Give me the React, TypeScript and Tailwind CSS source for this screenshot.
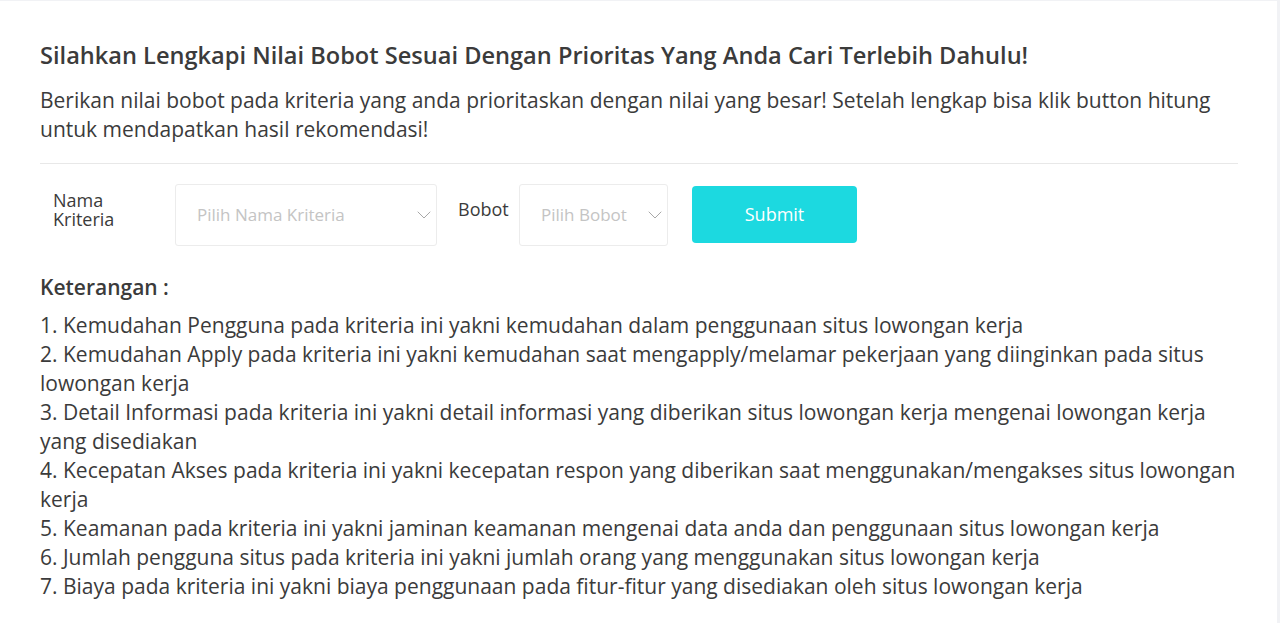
import { ChevronDown } from "lucide-react";

const items = [
  "1. Kemudahan Pengguna pada kriteria ini yakni kemudahan dalam penggunaan situs lowongan kerja",
  "2. Kemudahan Apply pada kriteria ini yakni kemudahan saat mengapply/melamar pekerjaan yang diinginkan pada situs lowongan kerja",
  "3. Detail Informasi pada kriteria ini yakni detail informasi yang diberikan situs lowongan kerja mengenai lowongan kerja yang disediakan",
  "4. Kecepatan Akses pada kriteria ini yakni kecepatan respon yang diberikan saat menggunakan/mengakses situs lowongan kerja",
  "5. Keamanan pada kriteria ini yakni jaminan keamanan mengenai data anda dan penggunaan situs lowongan kerja",
  "6. Jumlah pengguna situs pada kriteria ini yakni jumlah orang yang menggunakan situs lowongan kerja",
  "7. Biaya pada kriteria ini yakni biaya penggunaan pada fitur-fitur yang disediakan oleh situs lowongan kerja",
];

const SelectBox = ({ placeholder, width }: { placeholder: string; width: string }) => (
  <div
    className={`${width} h-[62px] flex items-center justify-between pl-[21px] pr-0 border border-[#ececec] rounded-[3px] bg-white`}
  >
    <span className="text-[17px] text-[#c4c4c4]">{placeholder}</span>
    <ChevronDown className="w-6 h-6 text-[#a8a8a8]" strokeWidth={1} />
  </div>
);

export default function App() {
  return (
    <div
      className="min-h-screen bg-[#f1f2f5] pt-px pr-[3px]"
      style={{ fontFamily: '"Open Sans", "Liberation Sans", sans-serif' }}
    >
      <div className="bg-white min-h-[622px] pl-10 pr-[39px] pt-[38px] pb-6 text-[#3b3b3b]">
        <h1 className="text-[23.6px] font-semibold leading-[32px]">
          Silahkan Lengkapi Nilai Bobot Sesuai Dengan Prioritas Yang Anda Cari Terlebih Dahulu!
        </h1>
        <p className="mt-[15px] text-[21px] leading-[29px]">
          Berikan nilai bobot pada kriteria yang anda prioritaskan dengan nilai yang besar! Setelah lengkap bisa klik
          button hitung untuk mendapatkan hasil rekomendasi!
        </p>
        <hr className="mt-[19px] border-t border-[#e8e8e8]" />

        {/* Form */}
        <div className="flex items-start mt-5">
          <label className="w-[135px] pl-[13px] pt-[7px] text-[18px] leading-[19px]">
            <span className="block">Nama</span>
            <span className="block">Kriteria</span>
          </label>
          <SelectBox placeholder="Pilih Nama Kriteria" width="w-[262px]" />
          <label className="ml-[21px] w-[61px] pt-[15px] text-[18px] leading-[20px]">Bobot</label>
          <SelectBox placeholder="Pilih Bobot" width="w-[149px]" />
          <button className="ml-6 mt-[2px] w-[165px] h-[57px] rounded-[4px] bg-[#1cd9e0] text-white text-[18px]">
            Submit
          </button>
        </div>

        <h2 className="mt-[26px] text-[21px] font-semibold leading-[30px]">Keterangan :</h2>
        <div className="mt-[9px] text-[21px] leading-[29px]">
          {items.map((t) => (
            <p key={t}>{t}</p>
          ))}
        </div>
      </div>
    </div>
  );
}
